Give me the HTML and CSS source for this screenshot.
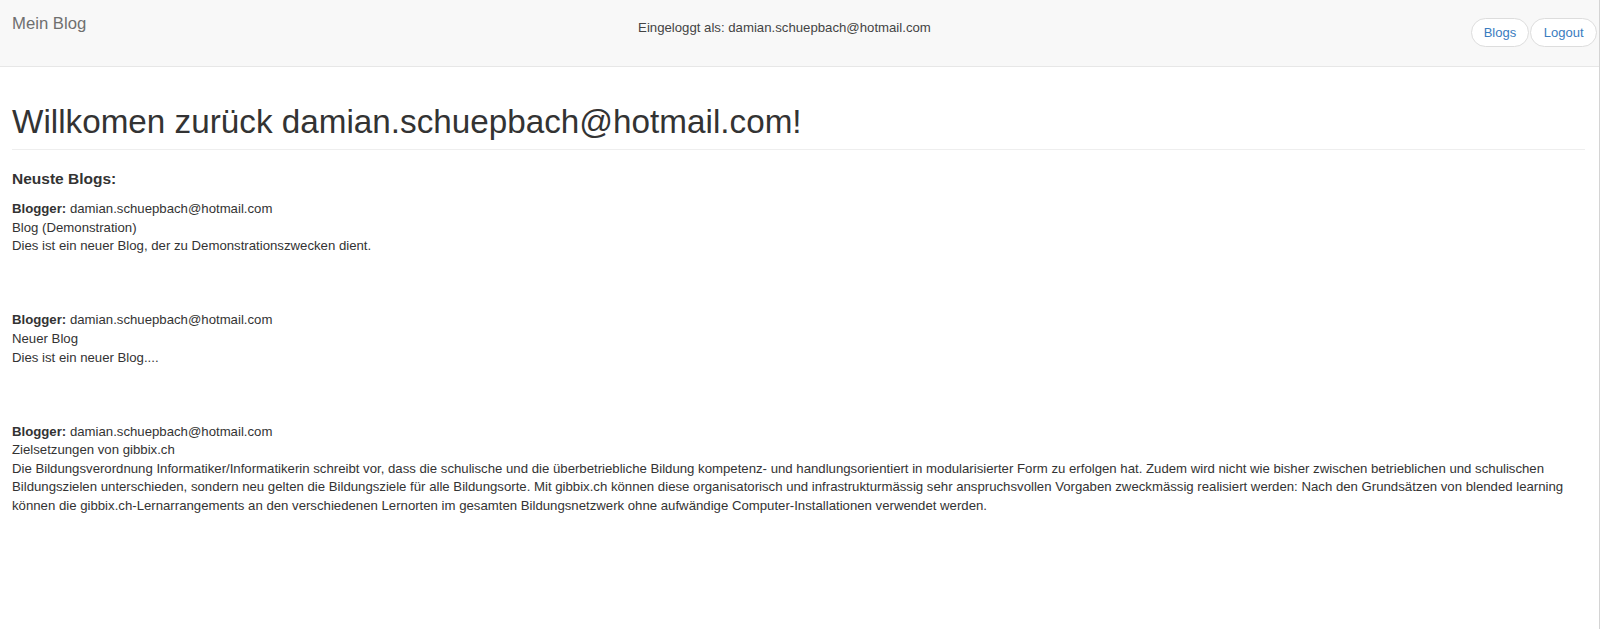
FILE: index.html
```html
<!DOCTYPE html>
<html lang="de">
<head>
<meta charset="utf-8">
<title>Mein Blog</title>
<link rel="stylesheet" href="styles.css">
</head>
<body>
<div class="page">
  <nav class="navbar">
    <a class="brand" href="#">Mein Blog</a>
    <p class="nav-text">Eingeloggt als: damian.schuepbach@hotmail.com</p>
    <div class="nav-buttons">
      <a class="pill" href="#">Blogs</a>
      <a class="pill" href="#">Logout</a>
    </div>
  </nav>
  <main class="content">
    <h1 class="page-header">Willkomen zurück damian.schuepbach@hotmail.com!</h1>
    <h4 class="section-title">Neuste Blogs:</h4>
    <div class="entry">
      <div><strong>Blogger:</strong> damian.schuepbach@hotmail.com</div>
      <div>Blog (Demonstration)</div>
      <div>Dies ist ein neuer Blog, der zu Demonstrationszwecken dient.</div>
    </div>
    <div class="entry">
      <div><strong>Blogger:</strong> damian.schuepbach@hotmail.com</div>
      <div>Neuer Blog</div>
      <div>Dies ist ein neuer Blog....</div>
    </div>
    <div class="entry">
      <div><strong>Blogger:</strong> damian.schuepbach@hotmail.com</div>
      <div>Zielsetzungen von gibbix.ch</div>
      <div>Die Bildungsverordnung Informatiker/Informatikerin schreibt vor, dass die schulische und die überbetriebliche Bildung kompetenz- und handlungsorientiert in modularisierter Form zu erfolgen hat. Zudem wird nicht wie bisher zwischen betrieblichen und schulischen Bildungszielen unterschieden, sondern neu gelten die Bildungsziele für alle Bildungsorte. Mit gibbix.ch können diese organisatorisch und infrastrukturmässig sehr anspruchsvollen Vorgaben zweckmässig realisiert werden: Nach den Grundsätzen von blended learning können die gibbix.ch-Lernarrangements an den verschiedenen Lernorten im gesamten Bildungsnetzwerk ohne aufwändige Computer-Installationen verwendet werden.</div>
    </div>
  </main>
</div>
</body>
</html>
```

FILE: styles.css
```css
html, body {
  margin: 0;
  padding: 0;
  background: #fff;
}

body {
  font-family: "Liberation Sans", Arial, Helvetica, sans-serif;
  font-size: 13.2px;
  line-height: 18.57px;
  color: #333;
}

.page {
  box-sizing: border-box;
  width: 1600px;
  min-height: 100vh;
  border-right: 1px solid #d4d4d4;
}

.navbar {
  display: flex;
  align-items: flex-start;
  height: 66px;
  background: #f8f8f8;
  border-bottom: 1px solid #e7e7e7;
  padding: 0 2px 0 12px;
}

.brand {
  font-size: 16.7px;
  line-height: 20px;
  padding-top: 14px;
  color: #6f6f6f;
  text-decoration: none;
}

.nav-text {
  margin: 0 auto;
  padding: 18px 0 0 12px;
  font-size: 13.2px;
  line-height: 20px;
  color: #444;
}

.nav-buttons {
  display: flex;
  gap: 1px;
  padding-top: 18px;
}

.pill {
  display: block;
  height: 27px;
  line-height: 27px;
  padding: 0 12px;
  border: 1px solid #ddd;
  border-radius: 15px;
  background: #fff;
  color: #3a7cc0;
  font-size: 13px;
  text-decoration: none;
}

.pill + .pill {
  padding: 0 12.5px;
}

.content {
  padding: 0 14px 0 12px;
}

.page-header {
  margin: 35px 0 0;
  padding-bottom: 7px;
  border-bottom: 1px solid #eee;
  font-size: 33.25px;
  font-weight: normal;
  line-height: 40px;
  color: #333;
}

.section-title {
  margin: 20px 0 12px;
  font-size: 15.5px;
  line-height: 18px;
  font-weight: bold;
  color: #333;
}

.entry {
  padding-bottom: 55.7px;
}

.entry strong {
  color: #333;
}
```
